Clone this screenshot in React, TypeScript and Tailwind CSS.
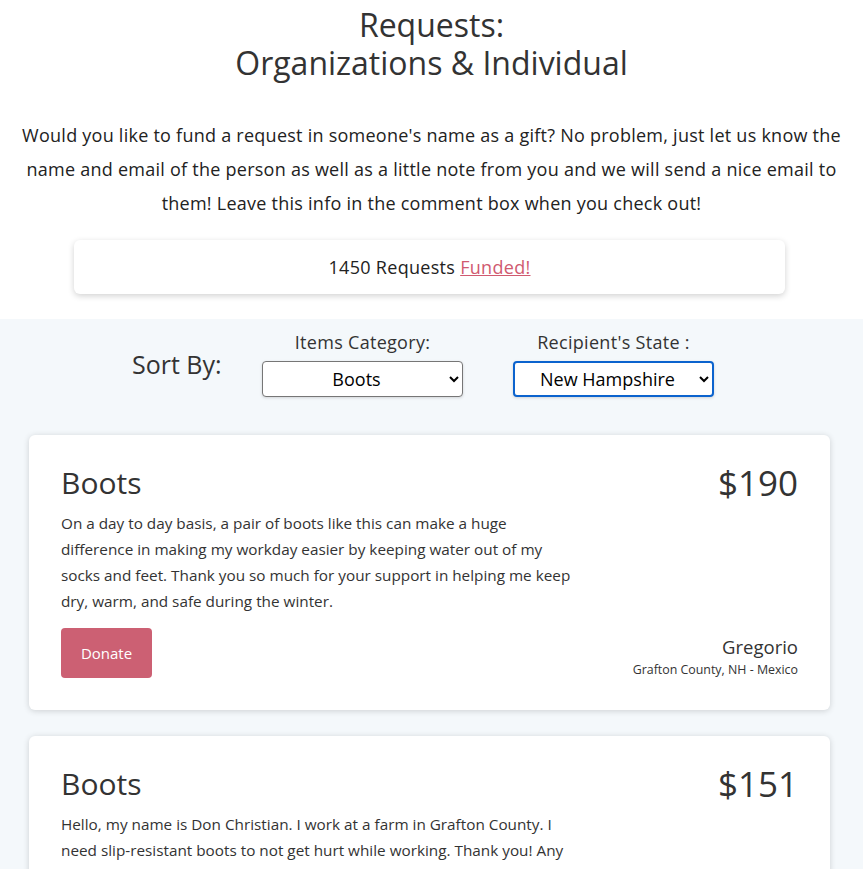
import React, { useState } from "react";

type Request = {
  id: number;
  item: string;
  price: number;
  lines: string[];
  name: string;
  location: string;
};

const requests: Request[] = [
  {
    id: 1,
    item: "Boots",
    price: 190,
    lines: [
      "On a day to day basis, a pair of boots like this can make a huge",
      "difference in making my workday easier by keeping water out of my",
      "socks and feet. Thank you so much for your support in helping me keep",
      "dry, warm, and safe during the winter.",
    ],
    name: "Gregorio",
    location: "Grafton County, NH - Mexico",
  },
  {
    id: 2,
    item: "Boots",
    price: 151,
    lines: [
      "Hello, my name is Don Christian. I work at a farm in Grafton County. I",
      "need slip-resistant boots to not get hurt while working. Thank you! Any",
      "help is greatly appreciated and will keep me safe at work this season.",
    ],
    name: "Don",
    location: "Grafton County, NH - Mexico",
  },
];

const RequestCard: React.FC<{ request: Request }> = ({ request }) => {
  return (
    <div className="flex justify-between rounded-md bg-white px-8 pt-[30px] pb-8 shadow-[0_1px_6px_rgba(0,0,0,0.16)]">
      <div className="flex flex-col">
        <h3 className="text-[30px] leading-[36px] text-[#333]">{request.item}</h3>
        <p className="mt-[9px] whitespace-nowrap text-[15.3px] leading-[26px] text-[#333]">
          {request.lines.map((l, i) => (
            <React.Fragment key={i}>
              {l}
              {i < request.lines.length - 1 && <br />}
            </React.Fragment>
          ))}
        </p>
        <button className="mt-[14px] h-[50px] w-[91px] rounded bg-[#cc6073] text-[15px] font-medium text-white">
          Donate
        </button>
      </div>
      <div className="flex flex-col items-end justify-between text-right">
        <span className="text-[35px] leading-[36px] text-[#333]">${request.price}</span>
        <div className="flex flex-col items-end">
          <span className="text-[18.5px] leading-[26px] text-[#333]">{request.name}</span>
          <span className="mt-[2px] text-[12.4px] leading-[16px] text-[#333]">{request.location}</span>
        </div>
      </div>
    </div>
  );
};

const App: React.FC = () => {
  const [category, setCategory] = useState<string>("Boots");
  const [state, setState] = useState<string>("New Hampshire");

  return (
    <div className="min-h-screen bg-white font-['Open_Sans',sans-serif] text-[#333]">
      <div className="pt-[6px] text-center">
        <h1 className="flex flex-col text-[32px] leading-[38px] text-[#333]">
          <span>Requests:</span>
          <span>Organizations & Individual</span>
        </h1>
        <p className="mt-[36px] whitespace-nowrap text-[18px] leading-[34px] tracking-[0.25px] text-[#222]">
          Would you like to fund a request in someone's name as a gift? No problem, just let us know the
          <br />
          name and email of the person as well as a little note from you and we will send a nice email to
          <br />
          them! Leave this info in the comment box when you check out!
        </p>
        <div className="mt-5 ml-[74px] flex h-[54px] w-[711px] items-center justify-center rounded-md bg-white text-[18px] tracking-[0.3px] text-[#222] shadow-[0_2px_6px_rgba(0,0,0,0.18)]">
          1450 Requests&nbsp;
          <a href="#" className="text-[#d05a70] underline">
            Funded!
          </a>
        </div>
      </div>

      <div className="mt-[25px] bg-[#f4f8fb] pb-10">
        <div className="flex items-end pt-[11px] pl-[132px]">
          <span className="mb-[14px] w-[130px] text-[25px] text-[#333]">Sort By:</span>
          <label className="flex w-[201px] flex-col items-center">
            <span className="text-[18px] leading-[24px] tracking-[0.3px] text-[#333]">Items Category:</span>
            <select
              value={category}
              onChange={(e) => setCategory(e.target.value)}
              className="mt-[7px] h-[36px] w-[201px] rounded border border-[#767676] bg-white text-[18px] text-black shadow-[0_1px_3px_rgba(0,0,0,0.15)] [text-align-last:center]"
            >
              <option>Boots</option>
              <option>Jackets</option>
              <option>Gloves</option>
            </select>
          </label>
          <label className="ml-[50px] flex w-[201px] flex-col items-center">
            <span className="text-[18px] leading-[24px] tracking-[0.3px] text-[#333]">Recipient's State :</span>
            <select
              value={state}
              onChange={(e) => setState(e.target.value)}
              className="mt-[7px] h-[36px] w-[201px] rounded border-2 border-[#0b63ce] bg-white text-[18px] text-black shadow-[0_1px_3px_rgba(0,0,0,0.15)] [text-align-last:center]"
            >
              <option>New Hampshire</option>
              <option>Vermont</option>
              <option>Maine</option>
            </select>
          </label>
        </div>

        <div className="mt-[38px] ml-[29px] flex w-[801px] flex-col gap-[26px]">
          {requests.map((r) => (
            <RequestCard key={r.id} request={r} />
          ))}
        </div>
      </div>
    </div>
  );
};

export default App;
